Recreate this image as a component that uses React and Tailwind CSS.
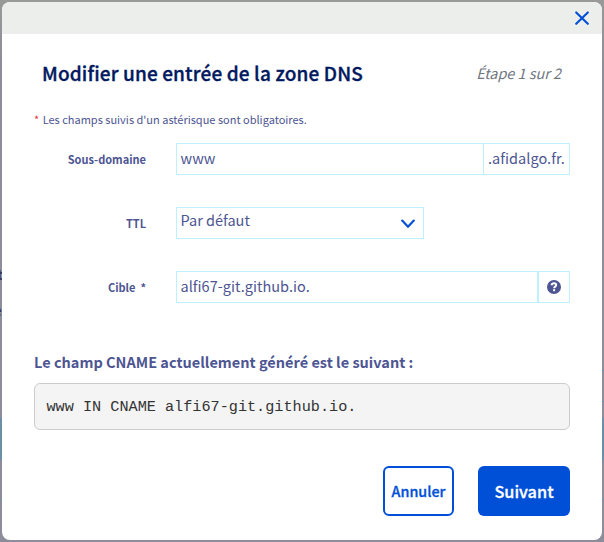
const FONT = "font-['Noto_Sans_CJK_SC','Noto_Sans',sans-serif]";

function Field({ label, children }) {
  return (
    <div className="flex h-8 items-center">
      <label className="w-[112px] shrink-0 pb-px text-right text-[11px] leading-4 font-bold whitespace-pre">{label}</label>
      <div className="ml-[30px] flex h-8 flex-1 items-stretch">{children}</div>
    </div>
  );
}

function CloseIcon() {
  return (
    <svg className="size-[14px]" viewBox="0 0 14 14" fill="none" stroke="#0050d7" strokeWidth="2.1" strokeLinecap="round">
      <path d="M1.2 1.4 12.8 12.8M12.8 1.4 1.2 12.8" />
    </svg>
  );
}

function ChevronIcon() {
  return (
    <svg className="mt-px h-[9px] w-[14px]" viewBox="0 0 14 9" fill="none" stroke="#0050d7" strokeWidth="2.2" strokeLinecap="round">
      <path d="M1.2 1.6 7 7.7 12.8 1.6" />
    </svg>
  );
}

function HelpIcon() {
  return (
    <svg className="size-[14px]" viewBox="0 0 14 14">
      <circle cx="7" cy="7" r="7" fill="#4d5592" />
      <path d="M4.5 5.2C4.8 3.9 5.7 3.3 7 3.3c1.4 0 2.2.8 2.2 1.7 0 1.6-2.1 1.6-2.1 3.2" fill="none" stroke="#fff" strokeWidth="2" />
      <rect x="6.1" y="9.2" width="2" height="2" fill="#fff" />
    </svg>
  );
}

export default function App() {
  return (
    <div className={`relative flex h-[542px] w-[604px] flex-col overflow-hidden bg-[linear-gradient(#999,#8d8c9a_12%,#8d8c9a)] p-0.5 text-[#4d5592] ${FONT}`}>
      <div className="absolute top-[418px] left-0 h-[42px] w-full bg-[#6a8fa6]" />
      <div className="absolute top-[370px] right-0 h-px w-1 bg-[#6a8fa6]" />
      <div className="absolute top-[401px] right-0 h-px w-1 bg-[#6a8fa6]" />
      <div className="absolute top-[499px] left-0 h-px w-full bg-[#7094a6]" />
      <span className="absolute top-[266px] -left-[3px] text-[14px] leading-4 font-bold text-[#34375f]">t</span>
      <span className="absolute top-[302px] -left-[6px] text-[14px] leading-4 text-[#34375f]">e</span>
      <main className="relative flex h-[538px] flex-col overflow-hidden rounded-lg bg-white">
        <div className="flex h-8 shrink-0 items-center justify-end bg-[#eceeeb] pr-[13px]">
          <CloseIcon />
        </div>
        <header className="mt-[25px] flex h-7 items-center justify-between pr-[41px] pl-10">
          <h1 className="text-[19px] leading-7 font-medium tracking-[0.14px] whitespace-nowrap text-[#00185e] [-webkit-text-stroke:0.35px_#00185e]">Modifier une entrée de la zone DNS</h1>
          <span className="text-[14.4px] leading-7 whitespace-nowrap text-[#6f7681] italic">Étape 1 sur 2</span>
        </header>
        <p className="mt-6 flex h-4 gap-[3.5px] pl-8 text-[11px] leading-4 whitespace-nowrap">
          <span className="text-[#e5343a]">*</span>
          <span>Les champs suivis d'un astérisque sont obligatoires.</span>
        </p>
        <form className="mt-4 flex flex-col gap-8 pr-8 pl-8 text-[14.5px] leading-5">
          <Field label="Sous-domaine">
            <div className="flex w-[308px] items-center border border-[#bef1ff] pb-0.5 pl-[3.5px]">www</div>
            <div className="-ml-px flex flex-1 items-center border border-[#bef1ff] pb-0.5 pl-1 tracking-[0.04px] whitespace-nowrap">.afidalgo.fr.</div>
          </Field>
          <Field label="TTL">
            <div className="flex w-[248px] items-center justify-between border border-[#bef1ff] pr-[8.5px] pl-[3.5px]">
              <span className="pb-1.5">Par défaut</span>
              <ChevronIcon />
            </div>
          </Field>
          <Field label="Cible  *">
            <div className="flex w-[362px] items-center border border-[#bef1ff] pb-0.5 pl-[3.5px] tracking-[0.03px]">alfi67-git.github.io.</div>
            <div className="flex flex-1 items-center justify-center border border-[#bef1ff] pb-px">
              <HelpIcon />
            </div>
          </Field>
        </form>
        <h2 className="mt-[49px] pl-8 text-[14.5px] leading-5 font-bold tracking-[0.01px] whitespace-nowrap">Le champ CNAME actuellement généré est le suivant :</h2>
        <pre className="mx-8 mt-[11px] flex h-[47px] shrink-0 items-center rounded-md border border-[#ccc] bg-[#f4f4f4] pl-[11.5px] font-['Liberation_Mono',monospace] text-[15.2px] leading-5 text-[#333]">www IN CNAME alfi67-git.github.io.</pre>
        <footer className="mt-9 mr-8 flex h-[50px] shrink-0 justify-end gap-6">
          <button className="w-[71px] rounded-md border-2 border-[#0050d7] text-[14.3px] leading-5 font-medium text-[#0050d7] [-webkit-text-stroke:0.3px_#0050d7]">Annuler</button>
          <button className="w-[92px] rounded-md bg-[#0050d7] text-[16.3px] leading-6 font-medium text-white [-webkit-text-stroke:0.3px_#fff]">Suivant</button>
        </footer>
      </main>
    </div>
  );
}
